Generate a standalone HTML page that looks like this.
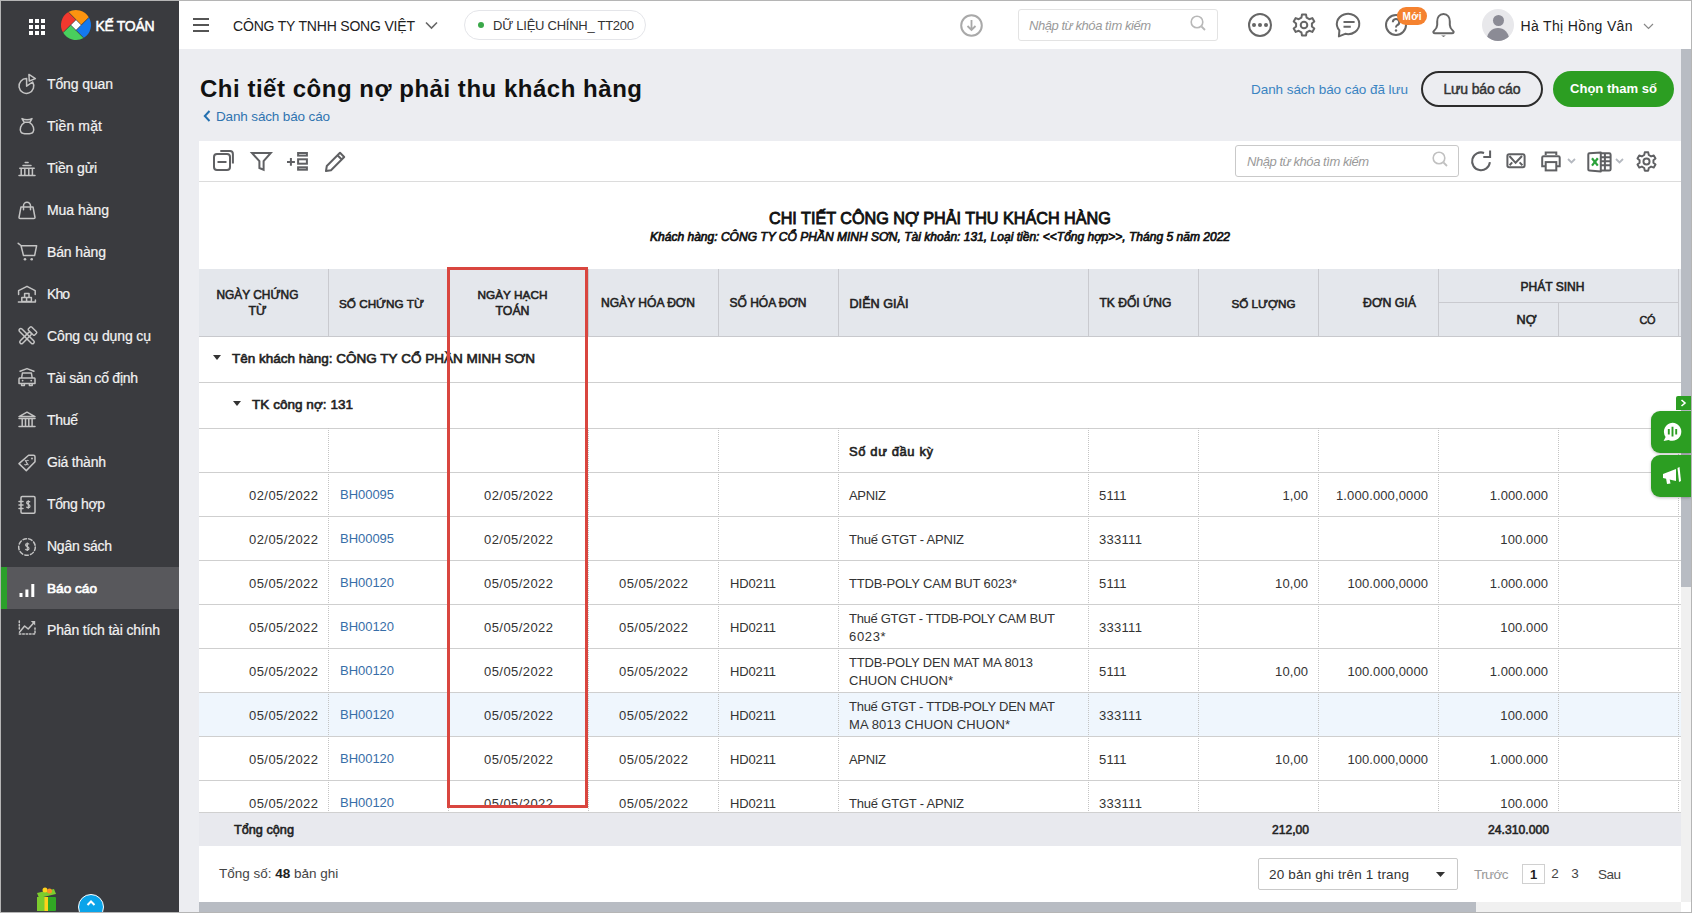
<!DOCTYPE html><html><head><meta charset="utf-8"><title>Chi tiết công nợ phải thu khách hàng</title><style>
*{box-sizing:border-box;margin:0;padding:0}
html,body{width:1692px;height:913px;overflow:hidden;background:#ecedf1;font-family:"Liberation Sans",sans-serif}
.t{position:absolute;white-space:nowrap}
.a{position:absolute}
svg{position:absolute;overflow:visible}
</style></head><body>
<div class="a" style="left:0;top:0;width:179px;height:913px;background:#3a3b3f"></div>
<div class="a" style="left:29px;top:19px;width:4px;height:4px;background:#fff"></div>
<div class="a" style="left:35px;top:19px;width:4px;height:4px;background:#fff"></div>
<div class="a" style="left:41px;top:19px;width:4px;height:4px;background:#fff"></div>
<div class="a" style="left:29px;top:25px;width:4px;height:4px;background:#fff"></div>
<div class="a" style="left:35px;top:25px;width:4px;height:4px;background:#fff"></div>
<div class="a" style="left:41px;top:25px;width:4px;height:4px;background:#fff"></div>
<div class="a" style="left:29px;top:31px;width:4px;height:4px;background:#fff"></div>
<div class="a" style="left:35px;top:31px;width:4px;height:4px;background:#fff"></div>
<div class="a" style="left:41px;top:31px;width:4px;height:4px;background:#fff"></div>
<svg style="left:60.5px;top:10px" width="30" height="30" viewBox="0 0 30 30">
<path d="M15 9.7 L9.7 15 L2.08 22.62 A15 15 0 0 1 7.38 2.08 Z" fill="#f2382e"/>
<path d="M15 9.7 L7.38 2.08 A15 15 0 0 1 27.92 7.38 L20.3 15 Z" fill="#fc9410"/>
<path d="M20.3 15 L27.92 7.38 A15 15 0 0 1 22.62 27.92 L15 20.3 Z" fill="#1479ef"/>
<path d="M15 20.3 L22.62 27.92 A15 15 0 0 1 2.08 22.62 L9.7 15 Z" fill="#49cf5d"/>
<path d="M15 9.7 L7.38 2.08 M20.3 15 L27.92 7.38 M15 20.3 L22.62 27.92 M9.7 15 L2.08 22.62" stroke="#3a3b3f" stroke-width="0.7"/>
<path d="M15 9.7 L20.3 15 L15 20.3 L9.7 15 Z" fill="#fff" stroke="#3a3b3f" stroke-width="0.6"/>
</svg>
<div class="t" style="left:95.50px;top:16.15px;font-size:14.00px;line-height:20px;letter-spacing:-0.325px;color:#fff;font-weight:400;-webkit-text-stroke:0.5px #fff;">KẾ TOÁN</div>
<div class="a" style="left:1px;top:567px;width:178px;height:42px;background:#58585c"></div>
<div class="a" style="left:1px;top:567px;width:6px;height:42px;background:#2ba02b"></div>
<div class="t" style="left:47.00px;top:74.15px;font-size:14.00px;line-height:20px;letter-spacing:-0.118px;color:#f2f2f2;font-weight:400;-webkit-text-stroke:0.2px #f2f2f2;">Tổng quan</div>
<div class="t" style="left:47.00px;top:116.15px;font-size:14.00px;line-height:20px;letter-spacing:0.151px;color:#f2f2f2;font-weight:400;-webkit-text-stroke:0.2px #f2f2f2;">Tiền mặt</div>
<div class="t" style="left:47.00px;top:158.15px;font-size:14.00px;line-height:20px;letter-spacing:-0.125px;color:#f2f2f2;font-weight:400;-webkit-text-stroke:0.2px #f2f2f2;">Tiền gửi</div>
<div class="t" style="left:47.00px;top:200.15px;font-size:14.00px;line-height:20px;letter-spacing:-0.039px;color:#f2f2f2;font-weight:400;-webkit-text-stroke:0.2px #f2f2f2;">Mua hàng</div>
<div class="t" style="left:47.00px;top:242.15px;font-size:14.00px;line-height:20px;letter-spacing:-0.135px;color:#f2f2f2;font-weight:400;-webkit-text-stroke:0.2px #f2f2f2;">Bán hàng</div>
<div class="t" style="left:47.00px;top:284.15px;font-size:14.00px;line-height:20px;letter-spacing:-0.956px;color:#f2f2f2;font-weight:400;-webkit-text-stroke:0.2px #f2f2f2;">Kho</div>
<div class="t" style="left:47.00px;top:326.15px;font-size:14.00px;line-height:20px;letter-spacing:-0.133px;color:#f2f2f2;font-weight:400;-webkit-text-stroke:0.2px #f2f2f2;">Công cụ dụng cụ</div>
<div class="t" style="left:47.00px;top:368.15px;font-size:14.00px;line-height:20px;letter-spacing:-0.282px;color:#f2f2f2;font-weight:400;-webkit-text-stroke:0.2px #f2f2f2;">Tài sản cố định</div>
<div class="t" style="left:47.00px;top:410.15px;font-size:14.00px;line-height:20px;letter-spacing:-0.304px;color:#f2f2f2;font-weight:400;-webkit-text-stroke:0.2px #f2f2f2;">Thuế</div>
<div class="t" style="left:47.00px;top:452.15px;font-size:14.00px;line-height:20px;letter-spacing:-0.214px;color:#f2f2f2;font-weight:400;-webkit-text-stroke:0.2px #f2f2f2;">Giá thành</div>
<div class="t" style="left:47.00px;top:494.15px;font-size:14.00px;line-height:20px;letter-spacing:-0.365px;color:#f2f2f2;font-weight:400;-webkit-text-stroke:0.2px #f2f2f2;">Tổng hợp</div>
<div class="t" style="left:47.00px;top:536.15px;font-size:14.00px;line-height:20px;letter-spacing:-0.242px;color:#f2f2f2;font-weight:400;-webkit-text-stroke:0.2px #f2f2f2;">Ngân sách</div>
<div class="t" style="left:47.00px;top:578.78px;font-size:13.63px;line-height:19px;letter-spacing:0.000px;color:#fff;font-weight:400;-webkit-text-stroke:0.63px #fff;-webkit-text-stroke:0.7px #fff;">Báo cáo</div>
<div class="t" style="left:47.00px;top:620.15px;font-size:14.00px;line-height:20px;letter-spacing:-0.165px;color:#f2f2f2;font-weight:400;-webkit-text-stroke:0.2px #f2f2f2;">Phân tích tài chính</div>
<svg style="left:18px;top:75px" width="18" height="18" viewBox="0 0 18 18"><path d="M8.6 3.6 V11.2 L14.6 7 A7.4 7.4 0 1 1 8.6 3.6 Z" stroke="#c4c4c4" stroke-width="1.5" fill="none" stroke-linecap="round" stroke-linejoin="round"/><path d="M10.9 -0.6 L17.4 3.6 L11.3 6 Z" stroke="#c4c4c4" stroke-width="1.5" fill="none" stroke-linecap="round" stroke-linejoin="round"/></svg>
<svg style="left:18px;top:117px" width="18" height="18" viewBox="0 0 18 18"><path d="M4 1.6 C6.5 3.2 11.5 3.2 14 1.6 L12 5.2 H6 Z" stroke="#c4c4c4" stroke-width="1.5" fill="none" stroke-linecap="round" stroke-linejoin="round"/><path d="M6.4 5.6 C2.4 7.8 1.4 12.4 3 15.2 C4.2 17.4 13.8 17.4 15 15.2 C16.6 12.4 15.6 7.8 11.6 5.6" stroke="#c4c4c4" stroke-width="1.5" fill="none" stroke-linecap="round" stroke-linejoin="round"/></svg>
<svg style="left:18px;top:159px" width="18" height="18" viewBox="0 0 18 18"><path d="M7.2 3.4 H10.1 M5 6.4 H13 M1.8 9.3 H16.2 M3.2 9.3 V16.5 M6.8 9.3 V16.5 M10.8 9.3 V16.5 M14.4 9.3 V16.5 M1 16.5 H17" stroke="#c4c4c4" stroke-width="1.5" fill="none" stroke-linecap="round" stroke-linejoin="round"/></svg>
<svg style="left:18px;top:201px" width="18" height="18" viewBox="0 0 18 18"><path d="M3 5.9 H15 L17 16.5 A1 1 0 0 1 16 17.5 H2 A1 1 0 0 1 1 16.5 Z" stroke="#c4c4c4" stroke-width="1.5" fill="none" stroke-linecap="round" stroke-linejoin="round"/><path d="M5.5 8.8 V4.7 A3.5 3.5 0 0 1 12.5 4.7 V8.8" stroke="#c4c4c4" stroke-width="1.5" fill="none" stroke-linecap="round" stroke-linejoin="round"/></svg>
<svg style="left:18px;top:243px" width="18" height="18" viewBox="0 0 18 18"><path d="M0.2 0.3 L3 2.5 L5.5 12.6 H16.6 L18.6 2.8 H3" stroke="#c4c4c4" stroke-width="1.5" fill="none" stroke-linecap="round" stroke-linejoin="round"/><circle cx="7" cy="16.3" r="1.3" fill="#c4c4c4"/><circle cx="13.7" cy="16.3" r="1.3" fill="#c4c4c4"/></svg>
<svg style="left:18px;top:285px" width="18" height="18" viewBox="0 0 18 18"><path d="M0.6 9.6 V5.7 L9 1.3 L17.2 5.7 V9.6 M0.4 16.9 H17.4 V15" stroke="#c4c4c4" stroke-width="1.5" fill="none" stroke-linecap="round" stroke-linejoin="round"/><path d="M6.6 8.6 H11 V12.6 H6.6 Z M3.8 12.6 H13.4 V16.6 H3.8 Z M8.6 12.6 V16.6" stroke="#c4c4c4" stroke-width="1.5" fill="none" stroke-linecap="round" stroke-linejoin="round"/></svg>
<svg style="left:18px;top:327px" width="18" height="18" viewBox="0 0 18 18"><g transform="rotate(-45 9 9.5)"><rect x="7.3" y="-1" width="3.4" height="20" rx="1.7" stroke="#c4c4c4" stroke-width="1.5" fill="none" stroke-linecap="round" stroke-linejoin="round"/></g><g transform="rotate(45 9 9.5)"><rect x="7.3" y="4" width="3.4" height="15" rx="1.7" stroke="#c4c4c4" stroke-width="1.5" fill="none" stroke-linecap="round" stroke-linejoin="round"/><rect x="4.6" y="-0.5" width="8.8" height="4.5" rx="1" stroke="#c4c4c4" stroke-width="1.4" fill="#3a3b3f"/></g></svg>
<svg style="left:18px;top:369px" width="18" height="18" viewBox="0 0 18 18"><path d="M2.1 2.2 L9 -0.4 L15.9 2.2" stroke="#c4c4c4" stroke-width="1.5" fill="none" stroke-linecap="round" stroke-linejoin="round"/><path d="M3.6 9 L4.4 4 H13.4 L14.2 9 M1.5 9 H16.3 A0.8 0.8 0 0 1 17 9.8 V14.4 H1 V9.8 Z M3.6 14.4 V16.6 H6.4 V14.4 M11.4 14.4 V16.6 H14.2 V14.4" stroke="#c4c4c4" stroke-width="1.5" fill="none" stroke-linecap="round" stroke-linejoin="round"/><circle cx="4.6" cy="11.6" r="0.9" fill="#c4c4c4"/><circle cx="13.2" cy="11.6" r="0.9" fill="#c4c4c4"/></svg>
<svg style="left:18px;top:411px" width="18" height="18" viewBox="0 0 18 18"><path d="M1 5.6 L9 1.2 L17 5.6 Z M1 7.6 H17 M4.2 7.6 V14.6 M7.5 7.6 V14.6 M10.8 7.6 V14.6 M14.1 7.6 V14.6 M1 15.6 H17" stroke="#c4c4c4" stroke-width="1.5" fill="none" stroke-linecap="round" stroke-linejoin="round"/></svg>
<svg style="left:18px;top:453px" width="18" height="18" viewBox="0 0 18 18"><path d="M1 10.6 L10.6 2.2 H15.4 A1.6 1.6 0 0 1 17 3.8 V8.8 L8.3 17.6 Z" stroke="#c4c4c4" stroke-width="1.5" fill="none" stroke-linecap="round" stroke-linejoin="round"/><circle cx="14" cy="5.4" r="1" fill="#c4c4c4"/><path d="M10.6 7.6 C9.4 6.6 7.2 8 8.6 9.6 C10 11.2 7.8 12.6 6.4 11.4 M7 7 L10.4 12.2" stroke="#c4c4c4" stroke-width="1.1" fill="none"/></svg>
<svg style="left:18px;top:495px" width="18" height="18" viewBox="0 0 18 18"><rect x="3" y="1.6" width="14" height="16.6" rx="1.2" stroke="#c4c4c4" stroke-width="1.5" fill="none" stroke-linecap="round" stroke-linejoin="round"/><path d="M1 6.6 H5 M1 10 H5 M1 13.4 H5" stroke="#c4c4c4" stroke-width="1.5" fill="none" stroke-linecap="round" stroke-linejoin="round"/><path d="M12 7.2 C11.6 6 8.6 6 8.6 7.8 C8.6 9.8 12 9 12 11.2 C12 13 9 13 8.4 11.8 M10.3 5.2 V13.8" stroke="#c4c4c4" stroke-width="1.2" fill="none"/></svg>
<svg style="left:18px;top:537px" width="18" height="18" viewBox="0 0 18 18"><circle cx="9" cy="10" r="8.3" stroke-dasharray="3.6 2.2" stroke="#c4c4c4" stroke-width="1.5" fill="none" stroke-linecap="round" stroke-linejoin="round"/><path d="M11 7.4 C10.6 6.2 7.6 6.2 7.6 8 C7.6 10 11 9.2 11 11.4 C11 13.2 8 13.2 7.4 12 M9.3 5.4 V14" stroke="#c4c4c4" stroke-width="1.2" fill="none"/></svg>
<svg style="left:18px;top:579px" width="18" height="18" viewBox="0 0 18 18"><path d="M3 14 V18 M8.9 10.5 V18 M14.8 5 V18" stroke="#fff" stroke-width="3" fill="none"/></svg>
<svg style="left:18px;top:621px" width="18" height="18" viewBox="0 0 18 18"><path d="M1.5 11.2 L6.6 5 L10.2 8 L15.6 2" stroke="#c4c4c4" stroke-width="1.5" fill="none" stroke-linecap="round" stroke-linejoin="round"/><path d="M12.8 0 H17.2 V4.4 Z" fill="#c4c4c4"/><path d="M1.3 0 V8 M1.3 13 H17 V7" stroke-dasharray="1.6 1.8" stroke="#c4c4c4" stroke-width="1.5" fill="none" stroke-linecap="round" stroke-linejoin="round"/></svg>
<svg style="left:36px;top:887px" width="22" height="24" viewBox="0 0 22 24">
<rect x="1" y="10" width="19" height="14" rx="1" fill="#31a824"/>
<rect x="1" y="10" width="9" height="14" fill="#7ccc2e"/>
<rect x="8.5" y="10" width="3.5" height="14" fill="#ffd21a"/>
<path d="M1 6 L18 2 L20 7 L3 11 Z" fill="#7ccc2e"/>
<circle cx="9" cy="3" r="2.5" fill="#ffd21a"/><circle cx="13.5" cy="4" r="2.5" fill="#f79227"/>
</svg>
<div class="a" style="left:78px;top:894px;width:26px;height:26px;border-radius:13px;background:#0aa4ea;border:1px solid #fff"></div>
<svg style="left:86px;top:900px" width="10" height="6" viewBox="0 0 10 6"><path d="M1.5 5 L5 1.5 L8.5 5" stroke="#fff" stroke-width="2" fill="none"/></svg>
<div class="a" style="left:179px;top:0;width:1513px;height:49px;background:#fff"></div>
<div class="a" style="left:193px;top:18px;width:16px;height:2px;background:#555"></div>
<div class="a" style="left:193px;top:24px;width:16px;height:2px;background:#555"></div>
<div class="a" style="left:193px;top:30px;width:16px;height:2px;background:#555"></div>
<div class="t" style="left:233.00px;top:16.15px;font-size:14.00px;line-height:20px;letter-spacing:-0.187px;color:#212121;font-weight:400;">CÔNG TY TNHH SONG VIỆT</div>
<svg style="left:425px;top:21px" width="13" height="9" viewBox="0 0 13 9"><path d="M1 1.5 L6.5 7 L12 1.5" stroke="#666" stroke-width="1.6" fill="none"/></svg>
<div class="a" style="left:464px;top:10px;width:182px;height:30px;border-radius:15px;border:1px solid #e4e5e9;background:#fff"></div>
<div class="a" style="left:478px;top:22px;width:6px;height:6px;border-radius:3px;background:#3aa849"></div>
<div class="t" style="left:493.00px;top:16.50px;font-size:13.00px;line-height:18px;letter-spacing:-0.261px;color:#333;font-weight:400;">DỮ LIỆU CHÍNH_ TT200</div>
<svg style="left:960px;top:14px" width="23" height="23" viewBox="0 0 23 23"><circle cx="11.5" cy="11.5" r="10.3" stroke="#a9a9a9" stroke-width="2" fill="none"/><path d="M11.5 6 V16 M7.5 12 L11.5 16 L15.5 12" stroke="#a9a9a9" stroke-width="1.8" fill="none"/></svg>
<div class="a" style="left:1018px;top:9px;width:200px;height:32px;border-radius:3px;border:1px solid #e3e3e3;background:#fff"></div>
<div class="t" style="left:1029.00px;top:16.50px;font-size:13.00px;line-height:18px;letter-spacing:-0.453px;color:#9a9a9a;font-weight:400;font-style:italic;">Nhập từ khóa tìm kiếm</div>
<svg style="left:1190px;top:15px" width="17" height="17" viewBox="0 0 17 17"><circle cx="7" cy="7" r="5.8" stroke="#b8b8b8" stroke-width="1.6" fill="none"/><path d="M11.5 11.5 L15 15" stroke="#b8b8b8" stroke-width="1.8"/></svg>
<svg style="left:1248px;top:13px" width="24" height="24" viewBox="0 0 24 24"><circle cx="12" cy="12" r="11" stroke="#666" stroke-width="2" fill="none"/><circle cx="6" cy="12" r="2" fill="#666"/><circle cx="12" cy="12" r="2" fill="#666"/><circle cx="18" cy="12" r="2" fill="#666"/></svg>
<svg style="left:1292px;top:13px" width="24" height="24" viewBox="0 0 24 24"><path d="M10 1.5 H14 L14.6 4.6 L17.3 6.2 L20.3 5.1 L22.3 8.6 L19.9 10.6 V13.4 L22.3 15.4 L20.3 18.9 L17.3 17.8 L14.6 19.4 L14 22.5 H10 L9.4 19.4 L6.7 17.8 L3.7 18.9 L1.7 15.4 L4.1 13.4 V10.6 L1.7 8.6 L3.7 5.1 L6.7 6.2 L9.4 4.6 Z" stroke="#666" stroke-width="2" fill="none" stroke-linejoin="round"/><circle cx="12" cy="12" r="3.3" stroke="#666" stroke-width="2" fill="none"/></svg>
<svg style="left:1336px;top:13px" width="24" height="24" viewBox="0 0 24 24"><path d="M3.4 17.4 A11.2 10.2 0 1 1 9.2 20.8 L2.9 23.4 Z" stroke="#666" stroke-width="2" fill="none" stroke-linejoin="round"/><path d="M7.5 9 H18.6 M7.5 13.8 H14.8" stroke="#666" stroke-width="2" fill="none"/></svg>
<svg style="left:1385px;top:14px" width="22" height="22" viewBox="0 0 22 22"><circle cx="11" cy="11" r="10" stroke="#666" stroke-width="2" fill="none"/><path d="M7.8 8.2 A3.2 3.2 0 1 1 12 11.3 C11 11.8 11 12.5 11 13.5" stroke="#666" stroke-width="2" fill="none"/><circle cx="11" cy="16.5" r="1.2" fill="#666"/></svg>
<div class="a" style="left:1397px;top:7px;width:30px;height:18px;border-radius:9px;background:#f5822f"></div>
<div class="t" style="left:1402.50px;top:9.54px;font-size:10.00px;line-height:14px;letter-spacing:0.391px;color:#fff;font-weight:700;">Mới</div>
<svg style="left:1432px;top:13px" width="23" height="25" viewBox="0 0 23 25"><path d="M11.5 1 C7.2 1 5.2 4.5 5.2 8.5 V12 C5.2 15 3.6 16.4 1.9 17.9 C0.7 19 1.5 20.3 3 20.3 H20 C21.5 20.3 22.3 19 21.1 17.9 C19.4 16.4 17.8 15 17.8 12 V8.5 C17.8 4.5 15.8 1 11.5 1 Z" stroke="#666" stroke-width="2" fill="none" stroke-linejoin="round"/><path d="M9.2 22.6 H13.8 L11.5 23.9 Z" fill="#666"/></svg>
<div class="a" style="left:1482px;top:9px;width:32px;height:32px;border-radius:16px;background:#e8e8eb;overflow:hidden"><div class="a" style="left:10.5px;top:5.5px;width:11px;height:11px;border-radius:6px;background:#8b8b95"></div><div class="a" style="left:5px;top:19px;width:22px;height:18px;border-radius:11px 11px 0 0;background:#8b8b95"></div></div>
<div class="t" style="left:1520.50px;top:16.15px;font-size:14.00px;line-height:20px;letter-spacing:0.347px;color:#212121;font-weight:400;">Hà Thị Hồng Vân</div>
<svg style="left:1643px;top:23px" width="11" height="7" viewBox="0 0 11 7"><path d="M1 1 L5.5 5.5 L10 1" stroke="#888" stroke-width="1.2" fill="none"/></svg>
<div class="t" style="left:200.00px;top:71.68px;font-size:24.00px;line-height:34px;letter-spacing:0.522px;color:#111;font-weight:700;">Chi tiết công nợ phải thu khách hàng</div>
<svg style="left:203px;top:110px" width="8" height="12" viewBox="0 0 8 12"><path d="M6.5 1 L1.8 6 L6.5 11" stroke="#2470b0" stroke-width="2" fill="none"/></svg>
<div class="t" style="left:216.00px;top:106.82px;font-size:13.50px;line-height:19px;letter-spacing:-0.146px;color:#2f74b0;font-weight:400;">Danh sách báo cáo</div>
<div class="t" style="left:1251.00px;top:79.82px;font-size:13.50px;line-height:19px;letter-spacing:-0.061px;color:#3a84c2;font-weight:400;">Danh sách báo cáo đã lưu</div>
<div class="a" style="left:1421px;top:71px;width:122px;height:36px;border-radius:18px;border:2px solid #2c2c2c;background:transparent"></div>
<div class="t" style="left:1443.50px;top:79.15px;font-size:14.00px;line-height:20px;letter-spacing:-0.166px;color:#333;font-weight:400;-webkit-text-stroke:0.45px #333;">Lưu báo cáo</div>
<div class="a" style="left:1553px;top:71px;width:121px;height:36px;border-radius:18px;background:#2c9e22"></div>
<div class="t" style="left:1570.00px;top:80.48px;font-size:13.05px;line-height:18px;letter-spacing:0.000px;color:#fff;font-weight:700;">Chọn tham số</div>
<div class="a" style="left:199px;top:141px;width:1482px;height:761px;background:#fff"></div>
<div class="a" style="left:199px;top:181px;width:1482px;height:1px;background:#dcdcdc"></div>
<svg style="left:213px;top:150px" width="22" height="21" viewBox="0 0 22 21"><rect x="1" y="4" width="16" height="16" rx="3" stroke="#5f6063" stroke-width="2" fill="none"/><path d="M7.3 1 H17 A2.9 2.9 0 0 1 19.9 3.9 V13.5" stroke="#5f6063" stroke-width="2" fill="none"/><path d="M4.5 12 H13.5" stroke="#5f6063" stroke-width="2" fill="none"/></svg>
<svg style="left:251px;top:151px" width="21" height="20" viewBox="0 0 21 20"><path d="M1 1.9 H19.8 L12.6 10.2 V18.7 L8.4 17 V10.2 Z" stroke="#5f6063" stroke-width="2" fill="none" stroke-linejoin="miter"/></svg>
<svg style="left:286px;top:151px" width="23" height="21" viewBox="0 0 23 21"><path d="M1 10.9 H8.9 M4.9 7 V14.7" stroke="#5f6063" stroke-width="2" fill="none"/><rect x="12.1" y="2" width="8.8" height="2.6" stroke="#5f6063" stroke-width="2" fill="none"/><rect x="12.1" y="8.3" width="8.8" height="4.4" stroke="#5f6063" stroke-width="2" fill="none"/><rect x="12.1" y="16.3" width="8.8" height="2.4" stroke="#5f6063" stroke-width="2" fill="none"/></svg>
<svg style="left:325px;top:151px" width="21" height="21" viewBox="0 0 21 21"><path d="M1 20 L1.8 15 L15 1.8 L19.2 6 L6 19.2 Z M12.5 4.3 L16.7 8.5" stroke="#5f6063" stroke-width="2" fill="none" stroke-linejoin="round"/></svg>
<div class="a" style="left:1235px;top:145px;width:224px;height:32px;border-radius:3px;border:1px solid #c9c9c9;background:#fff"></div>
<div class="t" style="left:1247.00px;top:152.50px;font-size:13.00px;line-height:18px;letter-spacing:-0.453px;color:#9a9a9a;font-weight:400;font-style:italic;">Nhập từ khóa tìm kiếm</div>
<svg style="left:1432px;top:151px" width="17" height="17" viewBox="0 0 17 17"><circle cx="7" cy="7" r="5.8" stroke="#c0c0c0" stroke-width="1.6" fill="none"/><path d="M11.5 11.5 L15 15" stroke="#c0c0c0" stroke-width="1.8"/></svg>
<svg style="left:1470px;top:151px" width="22" height="21" viewBox="0 0 22 21"><path d="M19.87 11.08 A8.9 8.9 0 1 1 14.04 1.94" stroke="#5f6063" stroke-width="2" fill="none"/><path d="M13.3 6.1 H20.1 V-0.6" stroke="#5f6063" stroke-width="2" fill="none" stroke-linejoin="miter"/></svg>
<svg style="left:1506px;top:153px" width="21" height="16" viewBox="0 0 21 16"><rect x="1.4" y="1.3" width="17.2" height="13" rx="1.8" stroke="#5f6063" stroke-width="2" fill="none"/><path d="M3.4 3 L9.6 9.8 L16 3 M3.6 12.2 L6.2 9.4 M13.6 9.4 L16.4 12.2" stroke="#5f6063" stroke-width="2" fill="none"/></svg>
<svg style="left:1540px;top:151px" width="22" height="20" viewBox="0 0 22 20"><path d="M5.7 4 V1.4 H16.3 V4" stroke="#5f6063" stroke-width="2" fill="none"/><path d="M5.7 15.3 H2.2 V6.6 A1.4 1.4 0 0 1 3.6 5.2 H18.3 A1.4 1.4 0 0 1 19.7 6.6 V15.3 H16.3" stroke="#5f6063" stroke-width="2" fill="none"/><rect x="5.7" y="11.1" width="10.6" height="8.3" stroke="#5f6063" stroke-width="2" fill="none"/></svg>
<svg style="left:1567px;top:158px" width="9" height="6" viewBox="0 0 9 6"><path d="M1 1 L4.5 4.5 L8 1" stroke="#b5b9c0" stroke-width="1.8" fill="none"/></svg>
<svg style="left:1587px;top:151.5px" width="25" height="21" viewBox="0 0 25 21"><path d="M1.3 2.4 Q1.3 1.4 2.4 1.3 L13.8 0.4 V19.4 L2.4 18.6 Q1.3 18.5 1.3 17.5 Z" stroke="#5f6063" stroke-width="2" fill="none" stroke-linejoin="round"/><path d="M13.8 1.3 H22.2 A1.4 1.4 0 0 1 23.6 2.7 V17.2 A1.4 1.4 0 0 1 22.2 18.6 H13.8 M17.9 1.3 V18.6 M13.8 5.3 H23.6 M13.8 9.3 H23.6 M13.8 13.3 H23.6" stroke="#5f6063" stroke-width="2" fill="none"/><path d="M5 6.2 L10.8 13.6 M10.8 6.2 L5 13.6" stroke="#2aa23a" stroke-width="2.2"/></svg>
<svg style="left:1615px;top:158px" width="9" height="6" viewBox="0 0 9 6"><path d="M1 1 L4.5 4.5 L8 1" stroke="#b5b9c0" stroke-width="1.8" fill="none"/></svg>
<svg style="left:1636px;top:151px" width="21" height="21" viewBox="0 0 24 24"><path d="M10 1.5 H14 L14.6 4.6 L17.3 6.2 L20.3 5.1 L22.3 8.6 L19.9 10.6 V13.4 L22.3 15.4 L20.3 18.9 L17.3 17.8 L14.6 19.4 L14 22.5 H10 L9.4 19.4 L6.7 17.8 L3.7 18.9 L1.7 15.4 L4.1 13.4 V10.6 L1.7 8.6 L3.7 5.1 L6.7 6.2 L9.4 4.6 Z" stroke="#5f6063" stroke-width="2.2" fill="none" stroke-linejoin="round"/><circle cx="12" cy="12" r="3.5" stroke="#5f6063" stroke-width="2.2" fill="none"/></svg>
<div class="t" style="left:769.00px;top:206.89px;font-size:16.18px;line-height:23px;letter-spacing:0.000px;color:#111;font-weight:400;-webkit-text-stroke:0.75px #111;-webkit-text-stroke:0.85px #111;">CHI TIẾT CÔNG NỢ PHẢI THU KHÁCH HÀNG</div>
<div class="t" style="left:650.00px;top:229.34px;font-size:12.00px;line-height:17px;letter-spacing:0.017px;color:#111;font-weight:400;font-style:italic;-webkit-text-stroke:0.55px #111;-webkit-text-stroke:0.7px #111;">Khách hàng: CÔNG TY CỔ PHẦN MINH SƠN, Tài khoản: 131, Loại tiền: &lt;&lt;Tổng hợp&gt;&gt;, Tháng 5 năm 2022</div>
<div class="a" style="left:199px;top:269px;width:1482px;height:68px;background:#e4e7ec;border-bottom:1px solid #c8c9cd"></div>
<div class="a" style="left:328px;top:269px;width:1px;height:67px;background:#c9cacf"></div>
<div class="a" style="left:448px;top:269px;width:1px;height:67px;background:#c9cacf"></div>
<div class="a" style="left:588px;top:269px;width:1px;height:67px;background:#c9cacf"></div>
<div class="a" style="left:718px;top:269px;width:1px;height:67px;background:#c9cacf"></div>
<div class="a" style="left:838px;top:269px;width:1px;height:67px;background:#c9cacf"></div>
<div class="a" style="left:1088px;top:269px;width:1px;height:67px;background:#c9cacf"></div>
<div class="a" style="left:1198px;top:269px;width:1px;height:67px;background:#c9cacf"></div>
<div class="a" style="left:1318px;top:269px;width:1px;height:67px;background:#c9cacf"></div>
<div class="a" style="left:1438px;top:269px;width:1px;height:67px;background:#c9cacf"></div>
<div class="a" style="left:1558px;top:302px;width:1px;height:34px;background:#c9cacf"></div>
<div class="a" style="left:1678px;top:269px;width:1px;height:67px;background:#c9cacf"></div>
<div class="a" style="left:1438px;top:302px;width:241px;height:1px;background:#c9cacf"></div>
<div class="t" style="left:216.50px;top:286.88px;font-size:11.90px;line-height:17px;letter-spacing:0.000px;color:#222;font-weight:400;-webkit-text-stroke:0.55px #222;">NGÀY CHỨNG</div>
<div class="t" style="left:248.50px;top:303.24px;font-size:12.29px;line-height:17px;letter-spacing:0.000px;color:#222;font-weight:400;-webkit-text-stroke:0.57px #222;">TỪ</div>
<div class="t" style="left:339.00px;top:295.94px;font-size:11.73px;line-height:16px;letter-spacing:0.000px;color:#222;font-weight:400;-webkit-text-stroke:0.54px #222;">SỐ CHỨNG TỪ</div>
<div class="t" style="left:477.50px;top:286.91px;font-size:11.81px;line-height:17px;letter-spacing:0.000px;color:#222;font-weight:400;-webkit-text-stroke:0.55px #222;">NGÀY HẠCH</div>
<div class="t" style="left:495.50px;top:303.23px;font-size:12.32px;line-height:17px;letter-spacing:0.000px;color:#222;font-weight:400;-webkit-text-stroke:0.57px #222;">TOÁN</div>
<div class="t" style="left:601.00px;top:295.32px;font-size:12.07px;line-height:17px;letter-spacing:0.000px;color:#222;font-weight:400;-webkit-text-stroke:0.56px #222;">NGÀY HÓA ĐƠN</div>
<div class="t" style="left:729.50px;top:295.34px;font-size:12.00px;line-height:17px;letter-spacing:-0.000px;color:#222;font-weight:400;-webkit-text-stroke:0.55px #222;">SỐ HÓA ĐƠN</div>
<div class="t" style="left:849.50px;top:294.62px;font-size:12.64px;line-height:18px;letter-spacing:0.000px;color:#222;font-weight:400;-webkit-text-stroke:0.58px #222;">DIỄN GIẢI</div>
<div class="t" style="left:1099.50px;top:295.32px;font-size:12.07px;line-height:17px;letter-spacing:0.000px;color:#222;font-weight:400;-webkit-text-stroke:0.56px #222;">TK ĐỐI ỨNG</div>
<div class="t" style="left:1231.50px;top:295.96px;font-size:11.66px;line-height:16px;letter-spacing:0.000px;color:#222;font-weight:400;-webkit-text-stroke:0.54px #222;">SỐ LƯỢNG</div>
<div class="t" style="left:1363.00px;top:295.23px;font-size:12.32px;line-height:17px;letter-spacing:0.000px;color:#222;font-weight:400;-webkit-text-stroke:0.57px #222;">ĐƠN GIÁ</div>
<div class="t" style="left:1520.50px;top:279.33px;font-size:12.04px;line-height:17px;letter-spacing:-0.000px;color:#222;font-weight:400;-webkit-text-stroke:0.56px #222;">PHÁT SINH</div>
<div class="t" style="left:1516.50px;top:310.61px;font-size:12.66px;line-height:18px;letter-spacing:-0.000px;color:#222;font-weight:400;-webkit-text-stroke:0.58px #222;">NỢ</div>
<div class="t" style="left:1639.50px;top:312.72px;font-size:10.92px;line-height:15px;letter-spacing:-0.380px;color:#222;font-weight:400;-webkit-text-stroke:0.50px #222;">CÓ</div>
<div class="a" style="left:199px;top:382px;width:1482px;height:1px;background:#cfcfcf"></div>
<div class="a" style="left:199px;top:428px;width:1482px;height:1px;background:#cfcfcf"></div>
<svg style="left:213px;top:355px" width="8" height="5" viewBox="0 0 8 5"><path d="M0 0 H8 L4 5 Z" fill="#333"/></svg>
<div class="t" style="left:232.00px;top:349.32px;font-size:13.50px;line-height:19px;letter-spacing:0.002px;color:#222;font-weight:400;-webkit-text-stroke:0.62px #222;">Tên khách hàng: CÔNG TY CỔ PHẦN MINH SƠN</div>
<svg style="left:233px;top:401px" width="8" height="5" viewBox="0 0 8 5"><path d="M0 0 H8 L4 5 Z" fill="#333"/></svg>
<div class="t" style="left:252.00px;top:394.82px;font-size:13.50px;line-height:19px;letter-spacing:0.042px;color:#222;font-weight:400;-webkit-text-stroke:0.62px #222;">TK công nợ: 131</div>
<div class="a" style="left:199px;top:428px;width:1482px;height:384px;overflow:hidden">
<div class="a" style="left:0;top:44px;width:1482px;height:1px;background:#cfcfcf"></div>
<div class="t" style="left:650.00px;top:14.50px;font-size:13.00px;line-height:18px;letter-spacing:0.604px;color:#222;font-weight:400;-webkit-text-stroke:0.60px #222;">Số dư đầu kỳ</div>
<div class="a" style="left:0;top:88px;width:1482px;height:1px;background:#cfcfcf"></div>
<div class="t" style="left:50.00px;top:58.50px;font-size:13.00px;line-height:18px;letter-spacing:0.437px;color:#333;font-weight:400;">02/05/2022</div>
<div class="t" style="left:141.00px;top:57.50px;font-size:13.00px;line-height:18px;letter-spacing:-0.035px;color:#376ea8;font-weight:400;">BH00095</div>
<div class="t" style="left:285.00px;top:58.50px;font-size:13.00px;line-height:18px;letter-spacing:0.437px;color:#333;font-weight:400;">02/05/2022</div>
<div class="t" style="left:650.00px;top:58.50px;font-size:13.00px;line-height:18px;letter-spacing:-0.321px;color:#333;font-weight:400;">APNIZ</div>
<div class="t" style="left:900.00px;top:58.50px;font-size:13.00px;line-height:18px;letter-spacing:0.203px;color:#333;font-weight:400;">5111</div>
<div class="t" style="left:1083.60px;top:58.50px;font-size:13.00px;line-height:18px;letter-spacing:0.033px;color:#333;font-weight:400;">1,00</div>
<div class="t" style="left:1137.00px;top:58.50px;font-size:13.00px;line-height:18px;letter-spacing:0.126px;color:#333;font-weight:400;">1.000.000,0000</div>
<div class="t" style="left:1290.70px;top:58.50px;font-size:13.00px;line-height:18px;letter-spacing:0.058px;color:#333;font-weight:400;">1.000.000</div>
<div class="a" style="left:0;top:132px;width:1482px;height:1px;background:#cfcfcf"></div>
<div class="t" style="left:50.00px;top:102.50px;font-size:13.00px;line-height:18px;letter-spacing:0.437px;color:#333;font-weight:400;">02/05/2022</div>
<div class="t" style="left:141.00px;top:101.50px;font-size:13.00px;line-height:18px;letter-spacing:-0.035px;color:#376ea8;font-weight:400;">BH00095</div>
<div class="t" style="left:285.00px;top:102.50px;font-size:13.00px;line-height:18px;letter-spacing:0.437px;color:#333;font-weight:400;">02/05/2022</div>
<div class="t" style="left:650.00px;top:102.50px;font-size:13.00px;line-height:18px;letter-spacing:-0.202px;color:#333;font-weight:400;">Thuế GTGT - APNIZ</div>
<div class="t" style="left:900.00px;top:102.50px;font-size:13.00px;line-height:18px;letter-spacing:0.290px;color:#333;font-weight:400;">333111</div>
<div class="t" style="left:1301.30px;top:102.50px;font-size:13.00px;line-height:18px;letter-spacing:0.118px;color:#333;font-weight:400;">100.000</div>
<div class="a" style="left:0;top:176px;width:1482px;height:1px;background:#cfcfcf"></div>
<div class="t" style="left:50.00px;top:146.50px;font-size:13.00px;line-height:18px;letter-spacing:0.437px;color:#333;font-weight:400;">05/05/2022</div>
<div class="t" style="left:141.00px;top:145.50px;font-size:13.00px;line-height:18px;letter-spacing:-0.035px;color:#376ea8;font-weight:400;">BH00120</div>
<div class="t" style="left:285.00px;top:146.50px;font-size:13.00px;line-height:18px;letter-spacing:0.437px;color:#333;font-weight:400;">05/05/2022</div>
<div class="t" style="left:420.00px;top:146.50px;font-size:13.00px;line-height:18px;letter-spacing:0.437px;color:#333;font-weight:400;">05/05/2022</div>
<div class="t" style="left:531.00px;top:146.50px;font-size:13.00px;line-height:18px;letter-spacing:-0.147px;color:#333;font-weight:400;">HD0211</div>
<div class="t" style="left:650.00px;top:146.50px;font-size:13.00px;line-height:18px;letter-spacing:-0.147px;color:#333;font-weight:400;">TTDB-POLY CAM BUT 6023*</div>
<div class="t" style="left:900.00px;top:146.50px;font-size:13.00px;line-height:18px;letter-spacing:0.203px;color:#333;font-weight:400;">5111</div>
<div class="t" style="left:1076.10px;top:146.50px;font-size:13.00px;line-height:18px;letter-spacing:0.092px;color:#333;font-weight:400;">10,00</div>
<div class="t" style="left:1148.40px;top:146.50px;font-size:13.00px;line-height:18px;letter-spacing:0.098px;color:#333;font-weight:400;">100.000,0000</div>
<div class="t" style="left:1290.70px;top:146.50px;font-size:13.00px;line-height:18px;letter-spacing:0.058px;color:#333;font-weight:400;">1.000.000</div>
<div class="a" style="left:0;top:220px;width:1482px;height:1px;background:#cfcfcf"></div>
<div class="t" style="left:50.00px;top:190.50px;font-size:13.00px;line-height:18px;letter-spacing:0.437px;color:#333;font-weight:400;">05/05/2022</div>
<div class="t" style="left:141.00px;top:189.50px;font-size:13.00px;line-height:18px;letter-spacing:-0.035px;color:#376ea8;font-weight:400;">BH00120</div>
<div class="t" style="left:285.00px;top:190.50px;font-size:13.00px;line-height:18px;letter-spacing:0.437px;color:#333;font-weight:400;">05/05/2022</div>
<div class="t" style="left:420.00px;top:190.50px;font-size:13.00px;line-height:18px;letter-spacing:0.437px;color:#333;font-weight:400;">05/05/2022</div>
<div class="t" style="left:531.00px;top:190.50px;font-size:13.00px;line-height:18px;letter-spacing:-0.147px;color:#333;font-weight:400;">HD0211</div>
<div class="t" style="left:650.00px;top:181.50px;font-size:13.00px;line-height:18px;letter-spacing:-0.297px;color:#333;font-weight:400;">Thuế GTGT - TTDB-POLY CAM BUT</div>
<div class="t" style="left:650.00px;top:199.50px;font-size:13.00px;line-height:18px;letter-spacing:0.655px;color:#333;font-weight:400;">6023*</div>
<div class="t" style="left:900.00px;top:190.50px;font-size:13.00px;line-height:18px;letter-spacing:0.290px;color:#333;font-weight:400;">333111</div>
<div class="t" style="left:1301.30px;top:190.50px;font-size:13.00px;line-height:18px;letter-spacing:0.118px;color:#333;font-weight:400;">100.000</div>
<div class="a" style="left:0;top:264px;width:1482px;height:1px;background:#cfcfcf"></div>
<div class="t" style="left:50.00px;top:234.50px;font-size:13.00px;line-height:18px;letter-spacing:0.437px;color:#333;font-weight:400;">05/05/2022</div>
<div class="t" style="left:141.00px;top:233.50px;font-size:13.00px;line-height:18px;letter-spacing:-0.035px;color:#376ea8;font-weight:400;">BH00120</div>
<div class="t" style="left:285.00px;top:234.50px;font-size:13.00px;line-height:18px;letter-spacing:0.437px;color:#333;font-weight:400;">05/05/2022</div>
<div class="t" style="left:420.00px;top:234.50px;font-size:13.00px;line-height:18px;letter-spacing:0.437px;color:#333;font-weight:400;">05/05/2022</div>
<div class="t" style="left:531.00px;top:234.50px;font-size:13.00px;line-height:18px;letter-spacing:-0.147px;color:#333;font-weight:400;">HD0211</div>
<div class="t" style="left:650.00px;top:225.50px;font-size:13.00px;line-height:18px;letter-spacing:-0.150px;color:#333;font-weight:400;">TTDB-POLY DEN MAT MA 8013</div>
<div class="t" style="left:650.00px;top:243.50px;font-size:13.00px;line-height:18px;letter-spacing:-0.000px;color:#333;font-weight:400;">CHUON CHUON*</div>
<div class="t" style="left:900.00px;top:234.50px;font-size:13.00px;line-height:18px;letter-spacing:0.203px;color:#333;font-weight:400;">5111</div>
<div class="t" style="left:1076.10px;top:234.50px;font-size:13.00px;line-height:18px;letter-spacing:0.092px;color:#333;font-weight:400;">10,00</div>
<div class="t" style="left:1148.40px;top:234.50px;font-size:13.00px;line-height:18px;letter-spacing:0.098px;color:#333;font-weight:400;">100.000,0000</div>
<div class="t" style="left:1290.70px;top:234.50px;font-size:13.00px;line-height:18px;letter-spacing:0.058px;color:#333;font-weight:400;">1.000.000</div>
<div class="a" style="left:0;top:265px;width:1482px;height:44px;background:#eff6fd"></div>
<div class="a" style="left:0;top:308px;width:1482px;height:1px;background:#cfcfcf"></div>
<div class="t" style="left:50.00px;top:278.50px;font-size:13.00px;line-height:18px;letter-spacing:0.437px;color:#333;font-weight:400;">05/05/2022</div>
<div class="t" style="left:141.00px;top:277.50px;font-size:13.00px;line-height:18px;letter-spacing:-0.035px;color:#376ea8;font-weight:400;">BH00120</div>
<div class="t" style="left:285.00px;top:278.50px;font-size:13.00px;line-height:18px;letter-spacing:0.437px;color:#333;font-weight:400;">05/05/2022</div>
<div class="t" style="left:420.00px;top:278.50px;font-size:13.00px;line-height:18px;letter-spacing:0.437px;color:#333;font-weight:400;">05/05/2022</div>
<div class="t" style="left:531.00px;top:278.50px;font-size:13.00px;line-height:18px;letter-spacing:-0.147px;color:#333;font-weight:400;">HD0211</div>
<div class="t" style="left:650.00px;top:269.50px;font-size:13.00px;line-height:18px;letter-spacing:-0.262px;color:#333;font-weight:400;">Thuế GTGT - TTDB-POLY DEN MAT</div>
<div class="t" style="left:650.00px;top:287.50px;font-size:13.00px;line-height:18px;letter-spacing:0.109px;color:#333;font-weight:400;">MA 8013 CHUON CHUON*</div>
<div class="t" style="left:900.00px;top:278.50px;font-size:13.00px;line-height:18px;letter-spacing:0.290px;color:#333;font-weight:400;">333111</div>
<div class="t" style="left:1301.30px;top:278.50px;font-size:13.00px;line-height:18px;letter-spacing:0.118px;color:#333;font-weight:400;">100.000</div>
<div class="a" style="left:0;top:352px;width:1482px;height:1px;background:#cfcfcf"></div>
<div class="t" style="left:50.00px;top:322.50px;font-size:13.00px;line-height:18px;letter-spacing:0.437px;color:#333;font-weight:400;">05/05/2022</div>
<div class="t" style="left:141.00px;top:321.50px;font-size:13.00px;line-height:18px;letter-spacing:-0.035px;color:#376ea8;font-weight:400;">BH00120</div>
<div class="t" style="left:285.00px;top:322.50px;font-size:13.00px;line-height:18px;letter-spacing:0.437px;color:#333;font-weight:400;">05/05/2022</div>
<div class="t" style="left:420.00px;top:322.50px;font-size:13.00px;line-height:18px;letter-spacing:0.437px;color:#333;font-weight:400;">05/05/2022</div>
<div class="t" style="left:531.00px;top:322.50px;font-size:13.00px;line-height:18px;letter-spacing:-0.147px;color:#333;font-weight:400;">HD0211</div>
<div class="t" style="left:650.00px;top:322.50px;font-size:13.00px;line-height:18px;letter-spacing:-0.321px;color:#333;font-weight:400;">APNIZ</div>
<div class="t" style="left:900.00px;top:322.50px;font-size:13.00px;line-height:18px;letter-spacing:0.203px;color:#333;font-weight:400;">5111</div>
<div class="t" style="left:1076.10px;top:322.50px;font-size:13.00px;line-height:18px;letter-spacing:0.092px;color:#333;font-weight:400;">10,00</div>
<div class="t" style="left:1148.40px;top:322.50px;font-size:13.00px;line-height:18px;letter-spacing:0.098px;color:#333;font-weight:400;">100.000,0000</div>
<div class="t" style="left:1290.70px;top:322.50px;font-size:13.00px;line-height:18px;letter-spacing:0.058px;color:#333;font-weight:400;">1.000.000</div>
<div class="a" style="left:0;top:396px;width:1482px;height:1px;background:#cfcfcf"></div>
<div class="t" style="left:50.00px;top:366.50px;font-size:13.00px;line-height:18px;letter-spacing:0.437px;color:#333;font-weight:400;">05/05/2022</div>
<div class="t" style="left:141.00px;top:365.50px;font-size:13.00px;line-height:18px;letter-spacing:-0.035px;color:#376ea8;font-weight:400;">BH00120</div>
<div class="t" style="left:285.00px;top:366.50px;font-size:13.00px;line-height:18px;letter-spacing:0.437px;color:#333;font-weight:400;">05/05/2022</div>
<div class="t" style="left:420.00px;top:366.50px;font-size:13.00px;line-height:18px;letter-spacing:0.437px;color:#333;font-weight:400;">05/05/2022</div>
<div class="t" style="left:531.00px;top:366.50px;font-size:13.00px;line-height:18px;letter-spacing:-0.147px;color:#333;font-weight:400;">HD0211</div>
<div class="t" style="left:650.00px;top:366.50px;font-size:13.00px;line-height:18px;letter-spacing:-0.202px;color:#333;font-weight:400;">Thuế GTGT - APNIZ</div>
<div class="t" style="left:900.00px;top:366.50px;font-size:13.00px;line-height:18px;letter-spacing:0.290px;color:#333;font-weight:400;">333111</div>
<div class="t" style="left:1301.30px;top:366.50px;font-size:13.00px;line-height:18px;letter-spacing:0.118px;color:#333;font-weight:400;">100.000</div>
<div class="a" style="left:129px;top:0;width:1px;height:384px;background:repeating-linear-gradient(to bottom,#c4c4c4 0 1px,transparent 1px 2px)"></div>
<div class="a" style="left:249px;top:0;width:1px;height:384px;background:repeating-linear-gradient(to bottom,#c4c4c4 0 1px,transparent 1px 2px)"></div>
<div class="a" style="left:389px;top:0;width:1px;height:384px;background:repeating-linear-gradient(to bottom,#c4c4c4 0 1px,transparent 1px 2px)"></div>
<div class="a" style="left:519px;top:0;width:1px;height:384px;background:repeating-linear-gradient(to bottom,#c4c4c4 0 1px,transparent 1px 2px)"></div>
<div class="a" style="left:639px;top:0;width:1px;height:384px;background:repeating-linear-gradient(to bottom,#c4c4c4 0 1px,transparent 1px 2px)"></div>
<div class="a" style="left:889px;top:0;width:1px;height:384px;background:repeating-linear-gradient(to bottom,#c4c4c4 0 1px,transparent 1px 2px)"></div>
<div class="a" style="left:999px;top:0;width:1px;height:384px;background:repeating-linear-gradient(to bottom,#c4c4c4 0 1px,transparent 1px 2px)"></div>
<div class="a" style="left:1119px;top:0;width:1px;height:384px;background:repeating-linear-gradient(to bottom,#c4c4c4 0 1px,transparent 1px 2px)"></div>
<div class="a" style="left:1239px;top:0;width:1px;height:384px;background:repeating-linear-gradient(to bottom,#c4c4c4 0 1px,transparent 1px 2px)"></div>
<div class="a" style="left:1359px;top:0;width:1px;height:384px;background:repeating-linear-gradient(to bottom,#c4c4c4 0 1px,transparent 1px 2px)"></div>
<div class="a" style="left:1479px;top:0;width:1px;height:384px;background:repeating-linear-gradient(to bottom,#c4c4c4 0 1px,transparent 1px 2px)"></div>
</div>
<div class="a" style="left:199px;top:812px;width:1482px;height:34px;background:#e8e9ee;border-top:1px solid #d0d0d0"></div>
<div class="t" style="left:234.00px;top:821.10px;font-size:12.70px;line-height:18px;letter-spacing:0.000px;color:#222;font-weight:400;-webkit-text-stroke:0.59px #222;">Tổng cộng</div>
<div class="t" style="left:1272.00px;top:821.81px;font-size:12.10px;line-height:17px;letter-spacing:0.000px;color:#222;font-weight:400;-webkit-text-stroke:0.56px #222;">212,00</div>
<div class="t" style="left:1488.00px;top:821.78px;font-size:12.19px;line-height:17px;letter-spacing:0.000px;color:#222;font-weight:400;-webkit-text-stroke:0.56px #222;">24.310.000</div>
<div class="t" style="left:219px;top:864px;font-size:13.5px;line-height:20px;color:#444">Tổng số: <b style="color:#222">48</b> bản ghi</div>
<div class="a" style="left:1258px;top:858px;width:200px;height:32px;border:1px solid #c9c9c9;border-radius:2px;background:#fff"></div>
<div class="t" style="left:1269.00px;top:864.82px;font-size:13.50px;line-height:19px;letter-spacing:0.188px;color:#333;font-weight:400;">20 bản ghi trên 1 trang</div>
<svg style="left:1436px;top:872px" width="9" height="5" viewBox="0 0 9 5"><path d="M0 0 H9 L4.5 5 Z" fill="#333"/></svg>
<div class="t" style="left:1474.00px;top:864.82px;font-size:13.50px;line-height:19px;letter-spacing:-0.596px;color:#9a9a9a;font-weight:400;">Trước</div>
<div class="a" style="left:1522px;top:864px;width:23px;height:20px;border:1px solid #d0d0d0;background:#fff"></div>
<div class="t" style="left:1529.88px;top:865.50px;font-size:13.00px;line-height:18px;letter-spacing:0.000px;color:#222;font-weight:700;">1</div>
<div class="t" style="left:1551.25px;top:863.82px;font-size:13.50px;line-height:19px;letter-spacing:0.000px;color:#444;font-weight:400;">2</div>
<div class="t" style="left:1571.25px;top:863.82px;font-size:13.50px;line-height:19px;letter-spacing:0.000px;color:#444;font-weight:400;">3</div>
<div class="t" style="left:1598.00px;top:864.82px;font-size:13.50px;line-height:19px;letter-spacing:-0.511px;color:#444;font-weight:400;">Sau</div>
<div class="a" style="left:199px;top:902px;width:1482px;height:10px;background:#f0f0f0"></div>
<div class="a" style="left:199px;top:902px;width:1277px;height:10px;background:#b8bcc3"></div>
<div class="a" style="left:1681px;top:49px;width:10px;height:853px;background:#f0f0f0"></div>
<div class="a" style="left:1681px;top:49px;width:10px;height:538px;background:#b8bcc3"></div>
<div class="a" style="left:1681px;top:902px;width:10px;height:10px;background:#fff"></div>
<div class="a" style="left:447px;top:267px;width:141px;height:541px;border:3px solid #d9463f"></div>
<div class="a" style="left:1676px;top:396px;width:15px;height:14px;background:#2c9e22;border-radius:2px 0 0 0"></div>
<svg style="left:1680px;top:399px" width="7" height="8" viewBox="0 0 7 8"><path d="M1.5 1 L5 4 L1.5 7" stroke="#fff" stroke-width="1.6" fill="none"/></svg>
<div class="a" style="left:1651px;top:411px;width:40px;height:42px;background:#2c9e22;border-radius:9px 0 0 9px;box-shadow:0 1px 3px rgba(0,0,0,.25)"></div>
<svg style="left:1662px;top:422px" width="20" height="20" viewBox="0 0 20 20"><path d="M10.5 0.8 A9 9 0 1 1 6.6 18 L1.6 19 L3.6 15 A9 9 0 0 1 10.5 0.8 Z" fill="#fff"/><path d="M6.8 7 V12.4 M10.5 4.8 V14.6 M14.2 7 V12.4" stroke="#2c9e22" stroke-width="1.9"/></svg>
<div class="a" style="left:1651px;top:455px;width:40px;height:42px;background:#2c9e22;border-radius:9px 0 0 9px;box-shadow:0 1px 3px rgba(0,0,0,.25)"></div>
<svg style="left:1661px;top:466px" width="22" height="20" viewBox="0 0 22 20"><path d="M2 8 L15 3 V15 L2 12 Z" fill="#fff"/><path d="M16.5 2 L18.5 1 L20 15 L18 16 Z" fill="#fff"/><path d="M5 12 L6 18 L9.5 17.5 L8.5 12.5" fill="#fff"/></svg>
<div class="a" style="left:0;top:0;width:1692px;height:913px;border:1px solid #b5b5b5;pointer-events:none"></div>
</body></html>
